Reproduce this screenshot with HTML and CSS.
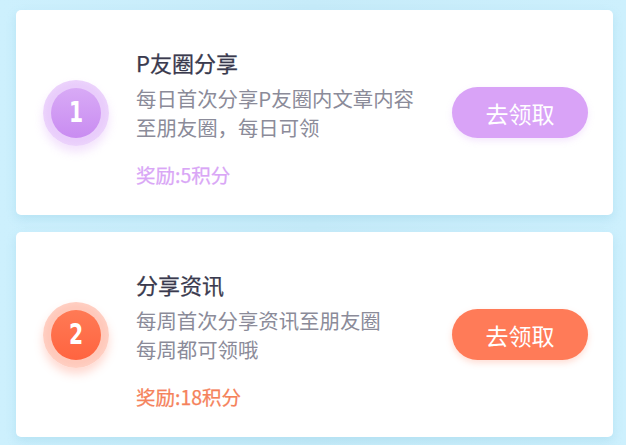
FILE: index.html
```html
<!DOCTYPE html>
<html lang="zh-CN">
<head>
<meta charset="utf-8">
<title>任务</title>
<link rel="stylesheet" href="styles.css">
</head>
<body>
<div class="list">
  <div class="card">
    <div class="badge badge-purple"><span class="badge-inner"><span class="num">1</span></span></div>
    <div class="info">
      <div class="title">P友圈分享</div>
      <div class="desc">每日首次分享P友圈内文章内容<br>至朋友圈，每日可领</div>
      <div class="reward reward-purple">奖励:5积分</div>
    </div>
    <div class="btn btn-purple">去领取</div>
  </div>
  <div class="card">
    <div class="badge badge-orange"><span class="badge-inner"><span class="num">2</span></span></div>
    <div class="info">
      <div class="title">分享资讯</div>
      <div class="desc">每周首次分享资讯至朋友圈<br>每周都可领哦</div>
      <div class="reward reward-orange">奖励:18积分</div>
    </div>
    <div class="btn btn-orange">去领取</div>
  </div>
</div>
</body>
</html>
```
FILE: styles.css
```css
html, body {
  margin: 0;
  padding: 0;
}
body {
  width: 626px;
  height: 445px;
  overflow: hidden;
  background: linear-gradient(90deg, #cdf0fd 0%, #c6ebf9 50%, #cdf0fd 100%);
  font-family: "Noto Sans CJK SC", "Noto Sans", sans-serif;
}
.list {
  display: flex;
  flex-direction: column;
  gap: 17px;
  padding: 10px 13px 0 16px;
}
.card {
  height: 205px;
  background: #ffffff;
  border-radius: 5px;
  box-shadow: 0 4px 10px rgba(120, 190, 220, 0.25);
  display: flex;
  align-items: center;
  padding: 0 25px 0 27px;
  box-sizing: border-box;
}
.badge {
  width: 66px;
  height: 66px;
  border-radius: 50%;
  display: flex;
  align-items: center;
  justify-content: center;
  flex-shrink: 0;
}
.badge-purple {
  background: radial-gradient(circle, #e9cdfb 60%, #f3e4fd 100%);
  box-shadow: 0 6px 10px rgba(214, 160, 245, 0.3);
}
.badge-orange {
  background: radial-gradient(circle, #ffc9bb 60%, #ffe0d8 100%);
  box-shadow: 0 6px 10px rgba(255, 120, 90, 0.28);
}
.badge-inner {
  width: 50px;
  height: 50px;
  border-radius: 50%;
  display: flex;
  align-items: center;
  justify-content: center;
  color: #fff;
}
.num {
  display: inline-block;
  font-family: "DejaVu Sans", "Liberation Sans", sans-serif;
  font-weight: bold;
  font-size: 29px;
  line-height: 1;
  transform: scaleX(0.7);
}
.badge-purple .badge-inner {
  background: linear-gradient(180deg, #d8aaf6 0%, #c98cf1 100%);
}
.badge-orange .badge-inner {
  background: linear-gradient(180deg, #ff7a55 0%, #ff6440 100%);
}
.info {
  flex: 1;
  margin-left: 27px;
  margin-top: 10px;
}
.title {
  font-size: 22px;
  line-height: 30px;
  font-weight: 400;
  color: #3a3a4e;
  -webkit-text-stroke: 0.25px #3a3a4e;
}
.desc {
  margin-top: 7px;
  font-size: 20.4px;
  line-height: 29px;
  color: #8b8b99;
}
.reward {
  margin-top: 19px;
  font-size: 19.5px;
  line-height: 28px;
  font-weight: 400;
}
.reward-purple {
  color: #d9a6f6;
  -webkit-text-stroke: 0.25px #d9a6f6;
}
.reward-orange {
  color: #f5825b;
  -webkit-text-stroke: 0.25px #f5825b;
}
.btn {
  width: 136px;
  height: 51px;
  border-radius: 26px;
  display: flex;
  align-items: center;
  justify-content: center;
  color: #fff;
  font-size: 23px;
  flex-shrink: 0;
}
.btn-purple {
  background: #d9a3f7;
  box-shadow: 0 3px 6px rgba(217, 163, 247, 0.25);
}
.btn-orange {
  background: #ff7b58;
  box-shadow: 0 3px 6px rgba(255, 123, 88, 0.25);
}
```
